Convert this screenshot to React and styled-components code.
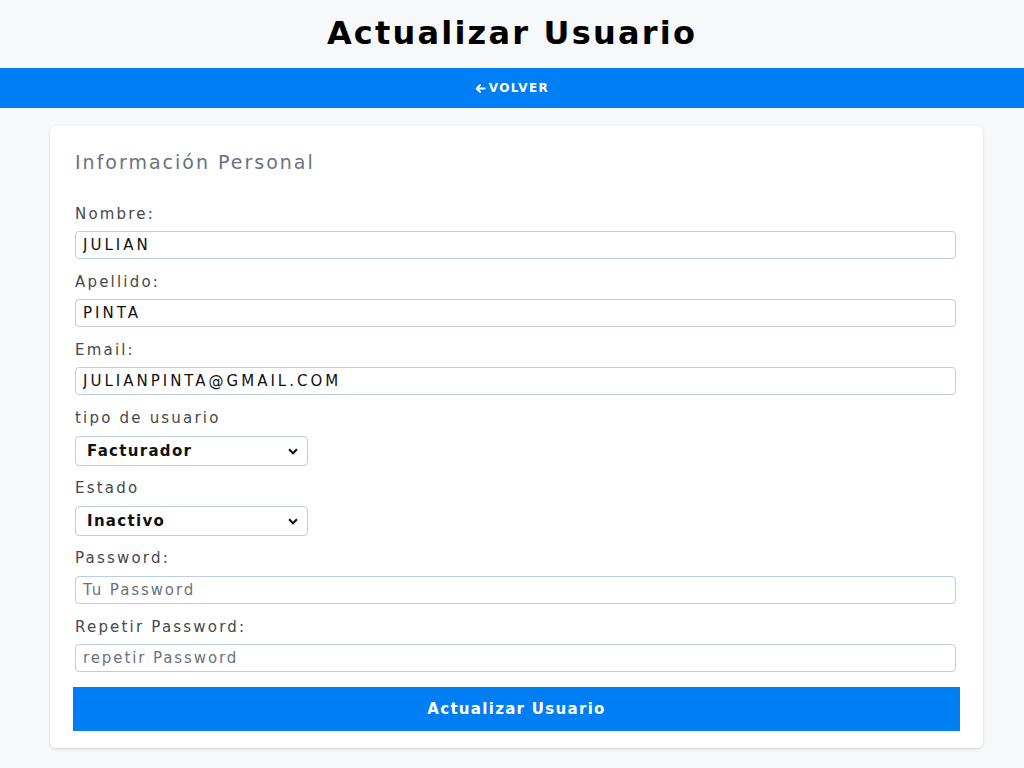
import React from 'react';
import styled, { createGlobalStyle } from 'styled-components';

const GlobalStyle = createGlobalStyle`
  body {
    margin: 0;
    background: #f7f8fa;
    font-family: 'DejaVu Sans', 'Noto Sans', sans-serif;
  }
`;

const fields = [
  { label: 'Nombre:', value: 'JULIAN' },
  { label: 'Apellido:', value: 'PINTA' },
  { label: 'Email:', value: 'JULIANPINTA@GMAIL.COM' },
];

const App = () => (
  <Page>
    <GlobalStyle />
    <Title>Actualizar Usuario</Title>
    <BackBar>
      <BackLink href="#">
        <Arrow viewBox="0 0 12 12">
          <path d="M10.5 6H2M5.5 2.2L1.8 6l3.7 3.8" />
        </Arrow>
        VOLVER
      </BackLink>
    </BackBar>
    <Card>
      <Legend>Información Personal</Legend>
      {fields.map((f) => (
        <Field key={f.label}>
          <Label>{f.label}</Label>
          <Input defaultValue={f.value} />
        </Field>
      ))}
      <Field $gap={8} $after={12}>
        <Label>tipo de usuario</Label>
        <SelectWrap>
          <Select defaultValue="Facturador">
            <option>Facturador</option>
            <option>Administrador</option>
          </Select>
          <Chevron viewBox="0 0 16 16">
            <path d="M3.5 6l4.5 4.5L12.5 6" />
          </Chevron>
        </SelectWrap>
      </Field>
      <Field $gap={8} $after={12}>
        <Label>Estado</Label>
        <SelectWrap>
          <Select defaultValue="Inactivo">
            <option>Activo</option>
            <option>Inactivo</option>
          </Select>
          <Chevron viewBox="0 0 16 16">
            <path d="M3.5 6l4.5 4.5L12.5 6" />
          </Chevron>
        </SelectWrap>
      </Field>
      <Field $gap={8}>
        <Label>Password:</Label>
        <Input type="password" placeholder="Tu Password" />
      </Field>
      <Field>
        <Label>Repetir Password:</Label>
        <Input type="password" placeholder="repetir Password" />
      </Field>
      <Submit type="button">Actualizar Usuario</Submit>
    </Card>
  </Page>
);

export default App;

const Page = styled.div`
  min-height: 768px;
  display: flex;
  flex-direction: column;
  align-items: center;
`;

const Title = styled.h1`
  margin: 0;
  height: 68px;
  line-height: 66px;
  font-size: 32px;
  font-weight: 700;
  color: #000;
  letter-spacing: 2.2px;
`;

const BackBar = styled.div`
  align-self: stretch;
  height: 40px;
  background: #007ff5;
  display: flex;
  align-items: center;
  justify-content: center;
`;

const BackLink = styled.a`
  display: flex;
  align-items: center;
  gap: 3px;
  color: #fff;
  font-size: 12px;
  font-weight: 700;
  letter-spacing: 1.4px;
  text-decoration: none;
`;

const Arrow = styled.svg`
  width: 11px;
  height: 11px;
  fill: none;
  stroke: #fff;
  stroke-width: 2;
  stroke-linecap: round;
  stroke-linejoin: round;
`;

const Card = styled.form`
  box-sizing: border-box;
  align-self: stretch;
  margin: 18px 41px 0 50px;
  padding: 24px 27px 17px 25px;
  background: #fff;
  border-radius: 6px;
  box-shadow: 0 1px 3px rgba(0, 0, 0, 0.15);
  display: flex;
  flex-direction: column;
`;

const Legend = styled.h2`
  margin: 0 0 30px;
  font-size: 19px;
  line-height: 24px;
  font-weight: 400;
  letter-spacing: 2px;
  color: #6b7280;
`;

const Field = styled.div`
  display: flex;
  flex-direction: column;
  align-items: flex-start;
  gap: ${(p) => p.$gap || 7}px;
  margin-bottom: ${(p) => p.$after || 13}px;
`;

const Label = styled.label`
  font-size: 15px;
  line-height: 20px;
  letter-spacing: 2.2px;
  color: #46484c;
`;

const Input = styled.input`
  box-sizing: border-box;
  width: 100%;
  height: 28px;
  padding: 0 7px;
  border: 1px solid #b9cde4;
  border-radius: 4px;
  font-family: inherit;
  font-size: 15px;
  letter-spacing: 3px;
  color: #111;
  outline: none;

  &::placeholder {
    color: #6b7280;
    letter-spacing: 1.9px;
  }
`;

const SelectWrap = styled.div`
  position: relative;
  width: 233px;
`;

const Select = styled.select`
  box-sizing: border-box;
  width: 100%;
  height: 30px;
  padding: 0 11px;
  appearance: none;
  background: #fff;
  border: 1px solid #b9cde4;
  border-radius: 4px;
  font-family: inherit;
  font-size: 15px;
  font-weight: 700;
  letter-spacing: 1.3px;
  color: #111;
  outline: none;
`;

const Chevron = styled.svg`
  position: absolute;
  right: 8px;
  top: 8px;
  width: 14px;
  height: 14px;
  fill: none;
  stroke: #111;
  stroke-width: 2.4;
  pointer-events: none;
`;

const Submit = styled.button`
  margin: 2px -4px 0 -2px;
  height: 44px;
  border: none;
  background: #007ff5;
  color: #fff;
  font-family: inherit;
  font-size: 15px;
  font-weight: 700;
  letter-spacing: 1.3px;
  cursor: pointer;
`;
